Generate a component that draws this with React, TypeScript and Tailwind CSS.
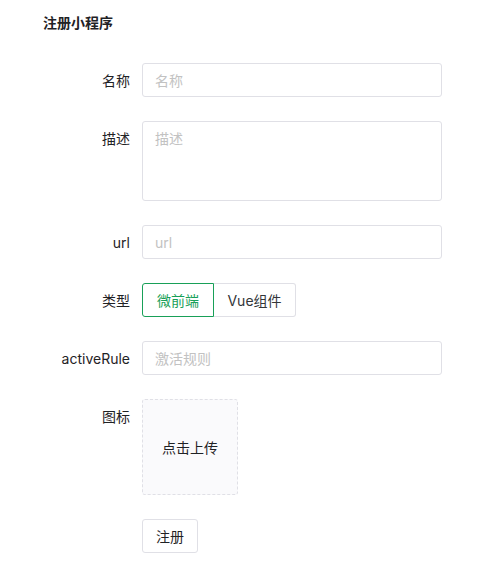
import { useState } from "react";

const font = { fontFamily: 'Inter, "Noto Sans CJK SC", sans-serif' };

function Row({ label, children }: { label: string; children: React.ReactNode }) {
    return (
        <div className="flex items-start mb-6">
            <div className="w-[87px] h-[34px] flex items-center justify-end text-[14px] text-[#1f2225] shrink-0">{label}</div>
            <div className="ml-3">{children}</div>
        </div>
    );
}

export default function App() {
    const [kind, setKind] = useState<"micro" | "vue">("micro");
    const inputCls = "w-[300px] h-[34px] border border-[#e0e0e6] rounded-[3px] px-3 text-[14px] text-[#333639] placeholder:text-[#c2c2c2] outline-none bg-white";

    return (
        <div className="min-h-[571px] bg-white pl-[43px] pt-[13px]" style={font}>
            <div className="text-[14px] leading-[20px] font-bold text-[#1f2225]">注册小程序</div>
            <form className="mt-[30px]" onSubmit={e => e.preventDefault()}>
                <Row label="名称">
                    <input className={inputCls} placeholder="名称" />
                </Row>
                <Row label="描述">
                    <textarea
                        className="block w-[300px] h-[80px] border border-[#e0e0e6] rounded-[3px] px-3 pt-[6px] text-[14px] leading-[22px] text-[#333639] placeholder:text-[#c2c2c2] outline-none resize-none"
                        placeholder="描述"
                    />
                </Row>
                <Row label="url">
                    <input className={inputCls} placeholder="url" />
                </Row>
                <Row label="类型">
                    <div className="flex h-[34px]">
                        <button
                            type="button"
                            onClick={() => setKind("micro")}
                            className={kind === "micro"
                                ? "w-[72px] h-[34px] border border-[#18a058] rounded-l-[3px] text-[14px] text-[#18a058]"
                                : "w-[72px] h-[34px] border border-[#e0e0e6] rounded-l-[3px] text-[14px] text-[#333639]"}
                        >微前端</button>
                        <button
                            type="button"
                            onClick={() => setKind("vue")}
                            className={kind === "vue"
                                ? "w-[82px] h-[34px] border border-[#18a058] -ml-px rounded-r-[3px] text-[14px] text-[#18a058]"
                                : "w-[82px] h-[34px] border border-[#e0e0e6] border-l-0 rounded-r-[3px] text-[14px] text-[#333639]"}
                        >Vue组件</button>
                    </div>
                </Row>
                <Row label="activeRule">
                    <input className={inputCls} placeholder="激活规则" />
                </Row>
                <Row label="图标">
                    <div className="w-[96px] h-[96px] border border-dashed border-[#e0e0e6] rounded-[3px] bg-[#fafafc] flex items-center justify-center text-[14px] text-[#1f2225] cursor-pointer">
                        点击上传
                    </div>
                </Row>
                <div className="flex">
                    <div className="w-[87px] shrink-0" />
                    <button type="submit" className="ml-3 w-[56px] h-[34px] border border-[#e0e0e6] rounded-[3px] text-[14px] text-[#1f2225] bg-white">注册</button>
                </div>
            </form>
        </div>
    );
}
